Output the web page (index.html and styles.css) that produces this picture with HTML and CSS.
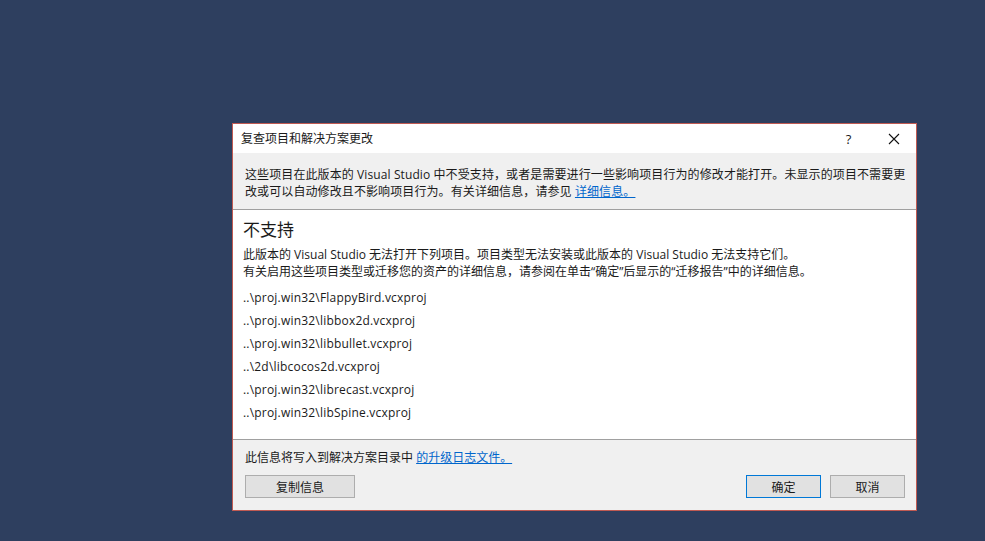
FILE: index.html
```html
<!DOCTYPE html>
<html lang="zh-CN">
<head>
<meta charset="utf-8">
<link rel="stylesheet" href="styles.css">
</head>
<body>
<div class="dialog">
  <div class="titlebar">
    <span class="title">复查项目和解决方案更改</span>
    <span class="tb-btn help">?</span>
    <span class="tb-btn close">
      <svg width="12" height="12" viewBox="0 0 12 12"><path d="M1 1L11 11M11 1L1 11" stroke="#111" stroke-width="1.1" fill="none"/></svg>
    </span>
  </div>
  <div class="info">
    这些项目在此版本的 Visual Studio 中不受支持，或者是需要进行一些影响项目行为的修改才能打开。未显示的项目不需要更<br>改或可以自动修改且不影响项目行为。有关详细信息，请参见 <a class="link">详细信息。</a>
  </div>
  <div class="content">
    <div class="heading">不支持</div>
    <div class="desc">此版本的 Visual Studio 无法打开下列项目。项目类型无法安装或此版本的 Visual Studio 无法支持它们。<br>有关启用这些项目类型或迁移您的资产的详细信息，请参阅在单击“确定”后显示的“迁移报告”中的详细信息。</div>
    <ul class="projects">
      <li>..\proj.win32\FlappyBird.vcxproj</li>
      <li>..\proj.win32\libbox2d.vcxproj</li>
      <li>..\proj.win32\libbullet.vcxproj</li>
      <li>..\2d\libcocos2d.vcxproj</li>
      <li>..\proj.win32\librecast.vcxproj</li>
      <li>..\proj.win32\libSpine.vcxproj</li>
    </ul>
  </div>
  <div class="footer">
    <div class="note">此信息将写入到解决方案目录中 <a class="link">的升级日志文件。</a></div>
    <div class="buttons">
      <button class="btn copy">复制信息</button>
      <div class="right">
        <button class="btn default">确定</button>
        <button class="btn">取消</button>
      </div>
    </div>
  </div>
</div>
</body>
</html>
```
FILE: styles.css
```css
html, body {
  margin: 0;
  padding: 0;
}
body {
  width: 985px;
  height: 541px;
  background: #2e3f5f;
  position: relative;
  overflow: hidden;
  font-family: "Open Sans", "Noto Sans CJK SC", sans-serif;
  font-size: 12px;
  color: #1a1a1a;
}
.dialog {
  position: absolute;
  left: 232px;
  top: 123px;
  width: 685px;
  height: 388px;
  box-sizing: border-box;
  border: 1px solid #c05a52;
  background: #f0f0f0;
  display: flex;
  flex-direction: column;
}
.titlebar {
  height: 29px;
  background: #fff;
  display: flex;
  align-items: center;
  flex-shrink: 0;
}
.title {
  flex: 1;
  padding-left: 8px;
  line-height: 29px;
}
.tb-btn {
  width: 45px;
  height: 29px;
  display: flex;
  align-items: center;
  justify-content: center;
}
.help {
  font-size: 13px;
}
.info {
  background: #f0f0f0;
  padding: 13px 6px 9px 12px;
  line-height: 17px;
  letter-spacing: 0.1px;
  border-bottom: 1px solid #a0a0a0;
  flex-shrink: 0;
}
.link {
  color: #0066cc;
  text-decoration: underline;
}
.content {
  flex: 1;
  background: #fff;
  padding: 7px 10px 0 10px;
}
.heading {
  font-family: "Noto Sans CJK SC", sans-serif;
  font-size: 17px;
  line-height: 24px;
}
.desc {
  margin-top: 5px;
  line-height: 17px;
}
.projects {
  list-style: none;
  margin: 6px 0 0 0;
  padding: 0;
}
.projects li {
  line-height: 23px;
  letter-spacing: 0.2px;
}
.footer {
  border-top: 1px solid #a0a0a0;
  padding: 9px 11px 12px 12px;
  flex-shrink: 0;
}
.note {
  line-height: 17px;
}
.buttons {
  margin-top: 9px;
  display: flex;
  justify-content: space-between;
}
.right {
  display: flex;
  gap: 9px;
}
.btn {
  font-family: inherit;
  font-size: 12px;
  color: #1a1a1a;
  height: 23px;
  width: 75px;
  padding: 0;
  background: #e1e1e1;
  border: 1px solid #adadad;
  border-radius: 0;
}
.btn.copy {
  width: 110px;
}
.btn.default {
  border-color: #0078d7;
}
```
